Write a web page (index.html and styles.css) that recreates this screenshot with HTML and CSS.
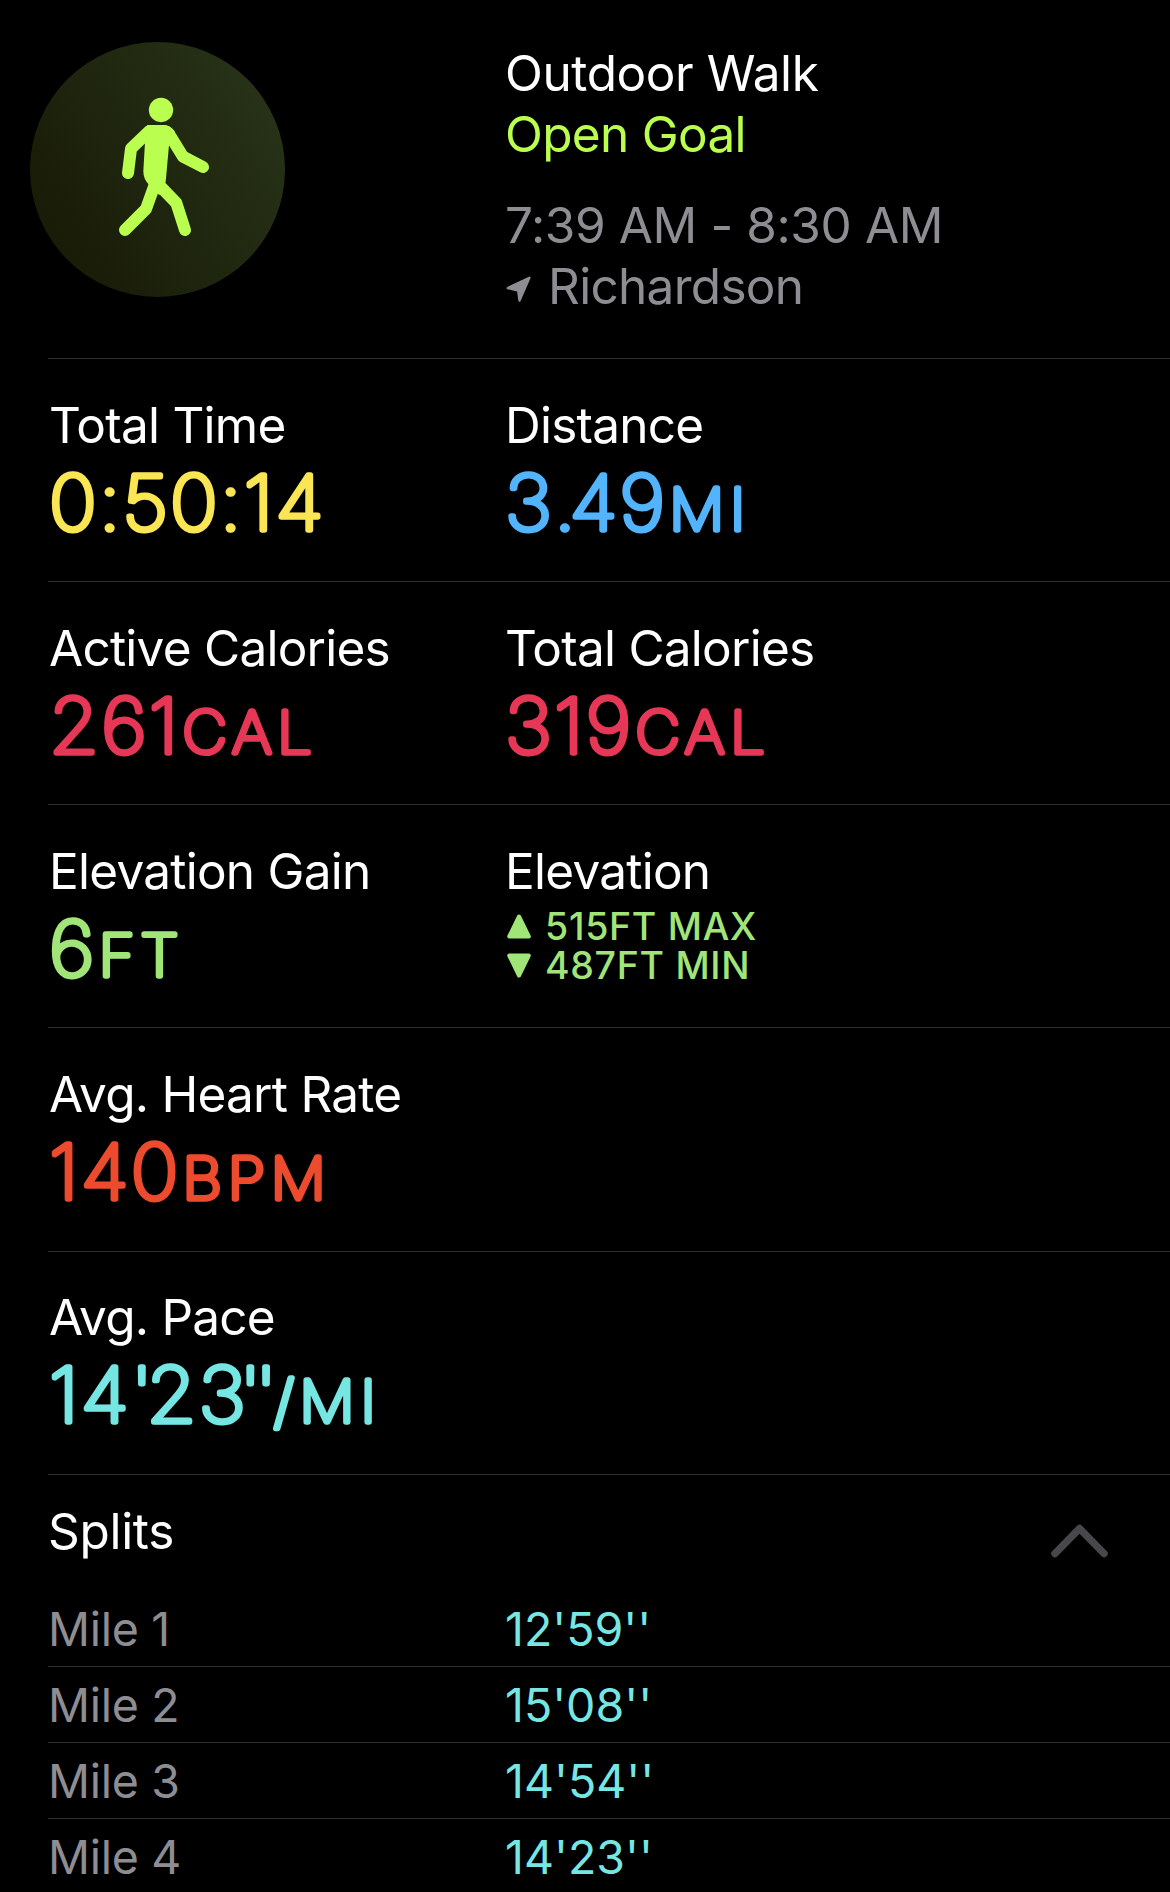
FILE: index.html
```
<!DOCTYPE html>
<html lang="en">
<head>
  <meta charset="utf-8">
  <meta name="viewport" content="width=device-width, initial-scale=1">
  <title>Outdoor Walk</title>
  <link rel="stylesheet" href="styles.css">
</head>
<body>
  <header class="summary">
    <svg class="badge" viewBox="0 0 765 765">
      <defs>
        <linearGradient id="badge-fill" x1="0.1" y1="0.75" x2="0.9" y2="0.25">
          <stop offset="0" stop-color="#191c07"/>
          <stop offset="1" stop-color="#263117"/>
        </linearGradient>
      </defs>
      <circle cx="382.5" cy="382.5" r="382.5" fill="url(#badge-fill)"/>
      <circle cx="393" cy="204" r="36.5" fill="#baff50"/>
      <path d="M352 249H400Q420 249 434 268L417 310L407 420L388 460L357 428Q340 412 340 388L345 300Z" fill="#baff50"/>
      <g class="limbs">
        <path d="M294 393L303 320L358 267"/>
        <path d="M403 267Q414 271 422 284L459 344L519 375"/>
        <path d="M377 420L348 501L285 564"/>
        <path d="M384 426L439 483L465 564"/>
      </g>
    </svg>
    <div class="info">
      <div class="title">Outdoor Walk</div>
      <div class="goal">Open Goal</div>
      <div class="time">7:39 AM - 8:30 AM</div>
      <div class="place">
        <svg class="arrow" viewBox="0 0 25 26"><path d="M1.8 12L23.4 1.8L13.5 24.6L12.2 14.7Z"/></svg>
        <span>Richardson</span>
      </div>
    </div>
  </header>

  <section class="row">
    <div class="stat yellow">
      <div class="label">Total Time</div>
      <svg class="value"><text x="0" y="75.5">0:50:14</text></svg>
    </div>
    <div class="stat blue">
      <div class="label">Distance</div>
      <svg class="value"><text x="0" y="75.5">3<tspan class="tight">.</tspan>49<tspan class="unit" dx="2">MI</tspan></text></svg>
    </div>
  </section>

  <section class="row">
    <div class="stat red">
      <div class="label">Active Calories</div>
      <svg class="value"><text x="0" y="75.5">261<tspan class="unit" dx="2">CAL</tspan></text></svg>
    </div>
    <div class="stat red">
      <div class="label">Total Calories</div>
      <svg class="value"><text x="0" y="75.5">319<tspan class="unit" dx="2">CAL</tspan></text></svg>
    </div>
  </section>

  <section class="row">
    <div class="stat green">
      <div class="label">Elevation Gain</div>
      <svg class="value"><text x="0" y="75.5">6<tspan class="unit" dx="2">FT</tspan></text></svg>
    </div>
    <div class="stat green">
      <div class="label">Elevation</div>
      <div class="ranges">
        <div class="range">
          <svg class="tri" viewBox="0 0 24 25"><path d="M12 2.5L21.8 22.5H2.2Z"/></svg>
          <span>515FT MAX</span>
        </div>
        <div class="range">
          <svg class="tri" viewBox="0 0 24 25"><path d="M12 22.5L21.8 2.5H2.2Z"/></svg>
          <span>487FT MIN</span>
        </div>
      </div>
    </div>
  </section>

  <section class="row row-heart">
    <div class="stat orange">
      <div class="label">Avg. Heart Rate</div>
      <svg class="value"><text x="0" y="75.5">140<tspan class="unit" dx="2">BPM</tspan></text></svg>
    </div>
  </section>

  <section class="row row-pace">
    <div class="stat cyan">
      <div class="label">Avg. Pace</div>
      <svg class="value"><text x="0" y="75.5">14<tspan class="tight">'</tspan>2<tspan class="tight">3''</tspan><tspan class="unit" dx="3">/MI</tspan></text></svg>
    </div>
  </section>

  <section class="splits">
    <div class="splits-head">
      <span>Splits</span>
      <svg class="chevron" viewBox="0 0 57 34"><path d="M4 29.5L28.5 4.5L53 29.5"/></svg>
    </div>
    <div class="split"><span class="mile">Mile 1</span><span class="pace">12'59''</span></div>
    <div class="split"><span class="mile">Mile 2</span><span class="pace">15'08''</span></div>
    <div class="split"><span class="mile">Mile 3</span><span class="pace">14'54''</span></div>
    <div class="split"><span class="mile">Mile 4</span><span class="pace">14'23''</span></div>
  </section>
</body>
</html>
```
FILE: styles.css
```
body {
  margin: 0;
  height: 1892px;
  overflow: hidden;
  background: #000;
  color: #fff;
  font-family: Inter, "Liberation Sans", sans-serif;
  font-size: 49.5px;
  letter-spacing: -0.7px;
  white-space: nowrap;
}
svg {
  display: block;
  flex: none;
}
.summary,
.row,
.splits {
  margin-left: 48px;
}
.summary {
  display: flex;
  box-sizing: border-box;
  height: 359px;
  padding-top: 42px;
  border-bottom: 1px solid #2e2e31;
}
.badge {
  width: 255px;
  height: 255px;
  margin-left: -18px;
  margin-right: 220px;
}
.limbs path {
  fill: none;
  stroke: #baff50;
  stroke-width: 36;
  stroke-linecap: round;
  stroke-linejoin: round;
}
.info {
  padding-top: 1px;
  line-height: 61px;
}
.title,
.time {
  letter-spacing: -0.4px;
}
.goal {
  color: #baff50;
}
.time,
.place {
  color: #8e8d93;
}
.time {
  margin-top: 30px;
}
.place {
  display: flex;
  align-items: center;
}
.arrow {
  width: 25px;
  height: 26px;
  margin: 5px 17px 0 1px;
  fill: #8e8d93;
  stroke: #8e8d93;
  stroke-width: 2.4;
  stroke-linejoin: round;
}
.row {
  display: grid;
  grid-template-columns: 456px 1fr;
  box-sizing: border-box;
  height: 223px;
  padding: 36px 0 0 1px;
  border-bottom: 1px solid #2e2e31;
}
.row-heart {
  height: 224px;
}
.row-pace {
  padding-top: 35px;
}
.label {
  color: #fff;
  line-height: 60px;
  letter-spacing: -0.75px;
}
.value {
  width: 400px;
  height: 92px;
  overflow: visible;
  font-size: 76px;
  font-weight: 100;
  letter-spacing: 2px;
  fill: currentColor;
  stroke: currentColor;
  stroke-width: 5.6px;
  stroke-linejoin: round;
}
.value text {
  transform: scaleX(1.06);
}
.unit {
  font-size: 58px;
  letter-spacing: 5.5px;
}
.tight {
  letter-spacing: -6px;
}
.yellow { color: #fae554; }
.blue { color: #51b4fc; }
.red { color: #e63756; }
.green { color: #a1e579; }
.orange { color: #ec4b2e; }
.cyan { color: #76e6e3; }
.ranges {
  padding-top: 6px;
}
.range {
  display: flex;
  align-items: center;
  font-size: 37.5px;
  font-weight: 500;
  letter-spacing: 0.7px;
  line-height: 39px;
}
.tri {
  width: 24px;
  height: 25px;
  margin: 0 14px 0 2px;
  fill: currentColor;
  stroke: currentColor;
  stroke-width: 4;
  stroke-linejoin: round;
}
.splits-head {
  display: flex;
  justify-content: space-between;
  box-sizing: border-box;
  height: 116px;
  padding-top: 26px;
  line-height: 61px;
  letter-spacing: -0.3px;
}
.chevron {
  width: 57px;
  height: 34px;
  margin: 23px 62px 0 0;
  fill: none;
  stroke: #48474c;
  stroke-width: 7.5;
  stroke-linecap: round;
  stroke-linejoin: round;
}
.split {
  display: grid;
  grid-template-columns: 457px 1fr;
  box-sizing: border-box;
  height: 76px;
  border-bottom: 1px solid #2e2e31;
  font-size: 46.5px;
  line-height: 76px;
}
.mile {
  color: #8e8d93;
  letter-spacing: -0.3px;
}
.pace {
  color: #76e6e3;
  letter-spacing: 0;
}
```
